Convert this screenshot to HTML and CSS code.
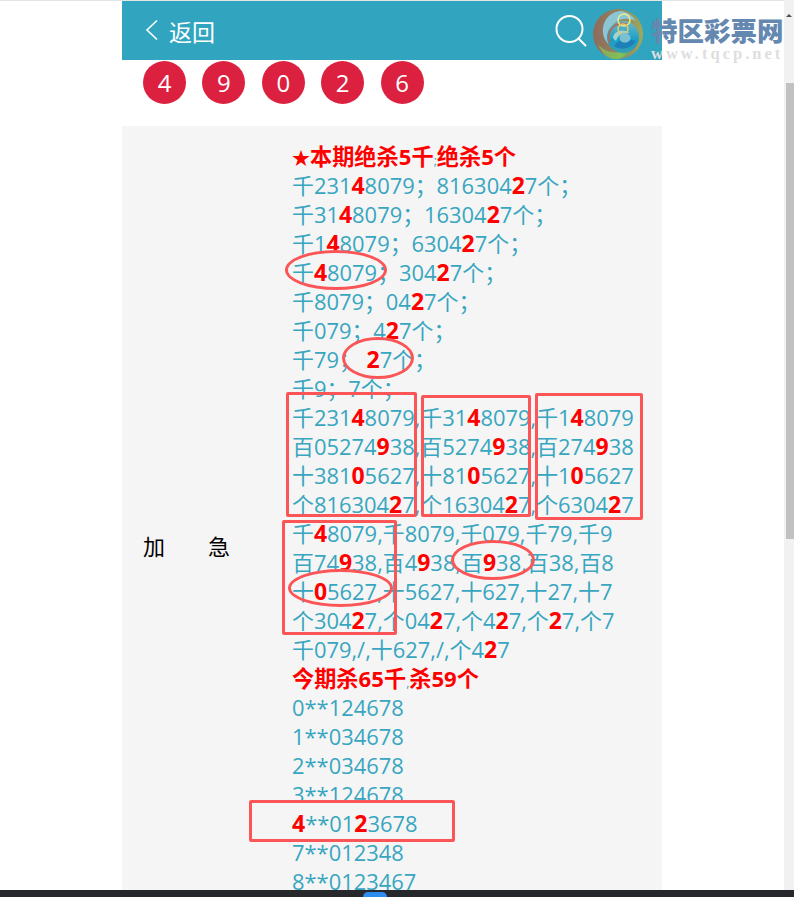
FILE: index.html
```html
<!DOCTYPE html>
<html lang="zh-CN">
<head>
    <meta charset="UTF-8">
    <title>返回</title>
    <link rel="stylesheet" href="styles.css">
</head>
<body>
    <div class="page">
        <header class="topbar">
            <a class="back">
                <svg class="back-icon" width="16" height="22" viewBox="0 0 16 22"><path d="M13 1.500 L3 11 L13 20.500" fill="none" stroke="#fff" stroke-width="1.6"/></svg>
                返回
            </a>
            <svg class="search-icon" width="32" height="34" viewBox="0 0 32 34"><circle cx="14.500" cy="15" r="13" fill="none" stroke="#fff" stroke-width="2"/><path d="M24 25 L31 32" stroke="#fff" stroke-width="2" fill="none"/></svg>
        </header>
        <div class="balls">
            <span class="ball">4</span>
            <span class="ball">9</span>
            <span class="ball">0</span>
            <span class="ball">2</span>
            <span class="ball">6</span>
        </div>
        <section class="panel">
            <div class="label">加<i></i>急</div>
            <div class="content">
                <p class="title"><span class="star">★</span>本期绝杀5千<small>;</small>绝杀5个</p>
                <p>千231<b>4</b>8079；816304<b>2</b>7个；</p>
                <p>千31<b>4</b>8079；16304<b>2</b>7个；</p>
                <p>千1<b>4</b>8079；6304<b>2</b>7个；</p>
                <p>千<b>4</b>8079；304<b>2</b>7个；</p>
                <p>千8079；04<b>2</b>7个；</p>
                <p>千079；4<b>2</b>7个；</p>
                <p>千79； <b>2</b>7个；</p>
                <p>千9；7个；</p>
                <p>千231<b>4</b>8079,千31<b>4</b>8079,千1<b>4</b>8079</p>
                <p>百05274<b>9</b>38,百5274<b>9</b>38,百274<b>9</b>38</p>
                <p>十381<b>0</b>5627,十81<b>0</b>5627,十1<b>0</b>5627</p>
                <p>个816304<b>2</b>7,个16304<b>2</b>7,个6304<b>2</b>7</p>
                <p>千<b>4</b>8079,千8079,千079,千79,千9</p>
                <p>百74<b>9</b>38,百4<b>9</b>38,百<b>9</b>38,百38,百8</p>
                <p>十<b>0</b>5627,十5627,十627,十27,十7</p>
                <p>个304<b>2</b>7,个04<b>2</b>7,个4<b>2</b>7,个<b>2</b>7,个7</p>
                <p>千079,/,十627,/,个4<b>2</b>7</p>
                <p class="title">今期杀65千<small>,</small>杀59个</p>
                <p>0**124678</p>
                <p>1**034678</p>
                <p>2**034678</p>
                <p>3**124678</p>
                <p><b>4</b>**01<b>2</b>3678</p>
                <p>7**012348</p>
                <p>8**0123467</p>
            </div>
        </section>

        <!-- hand drawn marks on top of the screenshot -->
        <span class="mark ring ring-1"></span>
        <span class="mark ring ring-2"></span>
        <span class="mark ring ring-3"></span>
        <span class="mark ring ring-4"></span>
        <span class="mark box box-1"></span>
        <span class="mark box box-2"></span>
        <span class="mark box box-3"></span>
        <span class="mark box box-4"></span>
        <span class="mark box box-5"></span>
    </div>

    <div class="logo">
        <svg class="logo-mark" width="52" height="52" viewBox="0 0 52 52">
            <defs>
                <linearGradient id="rim" x1="0" y1="0" x2="1" y2="0">
                    <stop offset="0" stop-color="#8f6a5c"/>
                    <stop offset="0.6" stop-color="#90895f"/>
                    <stop offset="1" stop-color="#9fa85c"/>
                </linearGradient>
                <linearGradient id="swirl" x1="0" y1="0" x2="0" y2="1">
                    <stop offset="0" stop-color="#6fb7c4"/>
                    <stop offset="0.6" stop-color="#169fca"/>
                    <stop offset="1" stop-color="#3a9fb0"/>
                </linearGradient>
                <linearGradient id="leaf" x1="0" y1="0" x2="1" y2="0">
                    <stop offset="0" stop-color="#8fa35a"/>
                    <stop offset="0.6" stop-color="#7fc25a"/>
                    <stop offset="1" stop-color="#5c7f8a"/>
                </linearGradient>
            </defs>
            <circle cx="26" cy="26" r="25" fill="url(#rim)"/>
            <path d="M30 3 C18 3 10 13 11 25 C12 33 17 37 20 38 C15 32 15 20 24 14 C30 10 38 10 44 13 C40 7 35 4 30 3Z" fill="#8cc6d4"/>
            <path d="M6 36 C14 46 30 48 45 37 C38 47 28 52 22 51 C14 50 9 44 6 36Z" fill="url(#leaf)"/>
            <circle cx="31" cy="29" r="16" fill="url(#swirl)"/>
            <path d="M18 35 C13 23 24 12 36 17" fill="none" stroke="#a5705c" stroke-width="2"/>
            <path d="M21 30 C22 23 30 20 38 25 C33 24 26 26 24 33Z" fill="#a8d2c8"/>
            <circle cx="32" cy="12" r="6" fill="none" stroke="#e2ee8a" stroke-width="1.500"/>
            <circle cx="31" cy="21" r="5" fill="none" stroke="#e8c86a" stroke-width="1.500"/>
            <path d="M22 38 C26 31 36 30 44 33 C39 41 29 43 22 38Z" fill="#1f7fb8"/>
            <path d="M30 25 C27 28 27 32 30 34 C36 36 40 32 38 28 C36 25 33 24 30 25Z" fill="#7cc0d2"/>
        </svg>
        <div class="logo-text">
            <strong>特区彩票网</strong>
            <em>www.tqcp.net</em>
        </div>
    </div>

    <div class="scrollbar"><span class="arrow"></span><span class="thumb"></span></div>
    <div class="taskbar"><span class="pill"></span></div>
</body>
</html>
```

FILE: styles.css
```css
*{
    margin:0;
    padding:0;
    box-sizing:border-box;
}
html, body {
    height:100%;
    overflow:hidden;
}
body {
    background-color:#fff;
    font-family:'Open Sans', 'Noto Sans CJK SC', sans-serif;
    border-top:1px solid #e4e4e4;
}
.page {
    position:relative;
    width:540px;
    margin-left:122px;
}
.topbar {
    display:flex;
    align-items:center;
    justify-content:space-between;
    height:59px;
    padding:0 75px 0 22px;
    background-color:#31a5bf;
}
.back {
    display:flex;
    align-items:center;
    gap:9px;
    color:#fff;
    font-size:23px;
}
.back-icon {
    margin-top:-2px;
}
.balls {
    display:flex;
    gap:16.4px;
    height:66px;
    padding:1px 0 0 21px;
}
.ball {
    display:flex;
    align-items:center;
    justify-content:center;
    width:43px;
    height:43px;
    border-radius:50%;
    background-color:#dc203f;
    color:#fff;
    font-size:24px;
}
.panel {
    display:flex;
    align-items:center;
    background-color:#f5f5f5;
    padding:16px 0 17px 21px;
}
.label {
    display:flex;
    width:150px;
    font-size:22px;
    color:#000;
}
.label i {
    width:43px;
}
.content {
    margin-left:-1px;
    margin-bottom:51px;
}
.content p {
    height:29px;
    line-height:29px;
    font-size:21.9px;
    color:#38a6c0;
    white-space:nowrap;
}
.content b {
    color:#f00;
    font-weight:700;
    font-size:23px;
    line-height:1;
}
.content .title {
    color:#f00;
    font-weight:700;
    font-size:22.2px;
}
.title .star {
    font-size:18px;
}
.title small {
    color:#38a6c0;
    font-weight:400;
    font-size:12px;
}
.mark {
    position:absolute;
    border:3px solid #fb5557;
}
.mark.ring {
    border-radius:50%;
}
.mark.box {
    border-radius:2px;
}
.ring-1 { left:163px; top:249px; width:102px; height:40px; }
.ring-2 { left:220px; top:336px; width:72px; height:42px; }
.ring-3 { left:329px; top:539px; width:84px; height:40px; }
.ring-4 { left:166px; top:568px; width:105px; height:38px; }
.box-1 { left:164px; top:391px; width:131px; height:125px; }
.box-2 { left:299px; top:394px; width:110px; height:122px; }
.box-3 { left:413px; top:392px; width:108px; height:127px; }
.box-4 { left:160px; top:519px; width:115px; height:115px; }
.box-5 { left:127px; top:799px; width:206px; height:42px; }
.logo {
    position:absolute;
    left:592px;
    top:8px;
    display:flex;
    align-items:flex-start;
    gap:7px;
}
.logo-text {
    display:flex;
    flex-direction:column;
    padding-top:7px;
}
.logo-text strong {
    font-family:'Noto Sans CJK SC', sans-serif;
    font-size:26.5px;
    line-height:30px;
    font-weight:900;
    color:#6488af;
}
.logo-text em {
    font-family:'Liberation Serif', serif;
    font-style:normal;
    font-weight:700;
    font-size:16.5px;
    line-height:18px;
    letter-spacing:3px;
    color:#dedede;
}
.scrollbar {
    position:fixed;
    top:0;
    right:0;
    width:10px;
    height:100%;
    background-color:#f1f1f1;
}
.arrow {
    position:absolute;
    left:2px;
    top:14px;
    border:3px solid transparent;
    border-top:0;
    border-bottom-color:#505050;
}
.thumb {
    display:block;
    margin:83px 0 0 2px;
    height:456px;
    background-color:#c1c1c1;
}
.taskbar {
    position:fixed;
    left:0;
    right:0;
    bottom:0;
    display:flex;
    justify-content:center;
    align-items:flex-end;
    height:7px;
    padding-right:44px;
    background-color:#26282b;
}
.pill {
    width:24px;
    height:5px;
    border-radius:5px 5px 0 0;
    background-color:#2d8cf0;
}
```
